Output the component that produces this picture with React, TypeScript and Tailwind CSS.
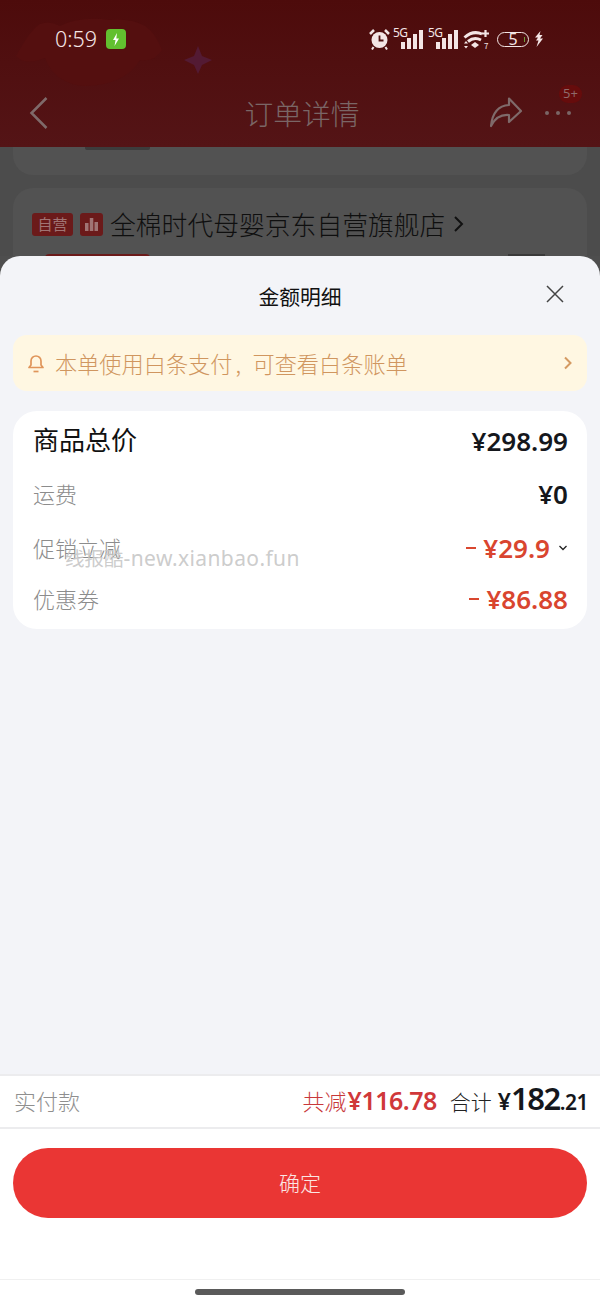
import React from "react";

const font = { fontFamily: '"Noto Sans CJK SC", "Noto Sans", sans-serif' };
const latin = { fontFamily: '"Noto Sans", "Noto Sans CJK SC", sans-serif' };

function Signal() {
  return (
    <span className="relative flex h-[20px] w-[30px] items-end justify-end gap-[2px]">
      <span className="absolute left-0 top-[-3px] text-[12px] leading-[14px] tracking-[-0.500px] text-[#f3e5e5]" style={latin}>5G</span>
      <span className="h-[7px] w-[4px] bg-[#f3e5e5]" />
      <span className="h-[11px] w-[4px] bg-[#f3e5e5]" />
      <span className="h-[15px] w-[4px] bg-[#f3e5e5]" />
      <span className="h-[19px] w-[4px] bg-[#f3e5e5]" />
    </span>
  );
}

function StatusBar() {
  return (
    <div className="relative flex h-[78px] items-center justify-between pl-[55px] pr-[56px]">
      <div className="flex items-center gap-[9px]">
        <span className="text-[21.500px] leading-[24px] text-[#f5e6e6] font-light" style={latin}>0:59</span>
        <span className="flex h-[20px] w-[20px] items-center justify-center rounded-[4px] bg-[#62c02f]">
          <svg width="8" height="13" viewBox="0 0 8 13"><path d="M5 0 1 7h2.500L2.500 13 7 5.500H4.300z" fill="#fff" /></svg>
        </span>
      </div>
      <div className="flex items-center">
        <svg width="21" height="22" viewBox="0 0 21 22" className="mr-[3px]">
          <circle cx="10.500" cy="12" r="8" fill="#f3e5e5" />
          <path d="M10.500 7.500V12.500H14.500" stroke="#4d1010" strokeWidth="1.800" fill="none" />
          <path d="M1 6 5 2M20 6 16 2" stroke="#f3e5e5" strokeWidth="2.500" />
          <path d="M4.500 19 3 21.500M16.500 19 18 21.500" stroke="#f3e5e5" strokeWidth="2" />
        </svg>
        <Signal />
        <span className="w-[5px]" />
        <Signal />
        <svg width="27" height="22" viewBox="0 0 27 22" className="ml-[5px]">
          <path d="M1.500 9.500Q10 2 19 6" stroke="#f3e5e5" strokeWidth="3" fill="none" />
          <path d="M5 13.500Q11 8.500 18 12" stroke="#f3e5e5" strokeWidth="3" fill="none" />
          <path d="M8 17 12 14 16 17 12 20z" fill="#f3e5e5" />
          <path d="M19 5.500H26M22.500 2V9" stroke="#f3e5e5" strokeWidth="2.200" />
          <path d="M1 15.500 3 13 5 15.500zM1 18 3 20.500 5 18z" fill="#f3e5e5" />
          <text x="21" y="21" fontSize="8" fill="#f3e5e5">7</text>
        </svg>
        <span className="relative ml-[7px] flex h-[15px] w-[32px] items-center justify-center rounded-full border border-[#f3e5e5] text-[16px] leading-[15px] text-[#f3e5e5]" style={latin}>
          5
          <span className="absolute right-[3px] top-[4px] h-[5px] w-[1.500px] bg-[#6f9a3a]" />
        </span>
        <svg width="10" height="18" viewBox="0 0 10 16" className="ml-[5px]">
          <path d="M6.500 0 1 6.500h3L2 9.500h2.500L2.500 16 9 7.500H6L8.500 4H5.500z" fill="#f3e5e5" />
        </svg>
      </div>
    </div>
  );
}

function NavBar() {
  return (
    <div className="grid h-[69px] grid-cols-[1fr_auto_1fr] items-start">
      <svg width="20" height="34" viewBox="0 0 20 34" className="ml-[29px] mt-[18px]">
        <path d="M17.500 2 2.500 17 17.500 32" stroke="#7f6a6a" strokeWidth="2.500" fill="none" />
      </svg>
      <span className="ml-[4px] mt-[16px] text-[28.800px] leading-[38px] font-light text-[#7a6666]">订单详情</span>
      <div className="relative mr-[29px] mt-[18px] flex items-start justify-self-end">
        <svg width="34" height="32" viewBox="0 0 34 32" className="mr-[22px]">
          <path d="M20 2.500 32 15 20 26V19Q8 18 2 30 4 10 20 9z" stroke="#7f6a6a" strokeWidth="2.200" fill="none" strokeLinejoin="round" />
        </svg>
        <span className="mt-[15px] flex gap-[7px]">
          <span className="h-[4px] w-[4px] rounded-full bg-[#7a6666]" />
          <span className="h-[4px] w-[4px] rounded-full bg-[#7a6666]" />
          <span className="h-[4px] w-[4px] rounded-full bg-[#7a6666]" />
        </span>
        <span className="absolute right-[-11px] top-[-11px] flex h-[18px] w-[23px] items-center justify-center rounded-full bg-[#660c0c] text-[13px] text-[#8e6a6a]" style={latin}>5+</span>
      </div>
    </div>
  );
}

function Row({ label, children, className }: { label: string; children: React.ReactNode; className: string }) {
  return (
    <div className={`flex items-center justify-between ${className}`}>
      <span className="mb-[3px] text-[22px] font-light leading-[30px] text-[#8c8c8c]" style={font}>{label}</span>
      {children}
    </div>
  );
}

export default function App() {
  return (
    <div className="relative flex h-[1304px] w-[600px] flex-col overflow-hidden bg-[#4e4e4e]" style={font}>
      <div className="relative h-[147px] shrink-0 bg-gradient-to-b from-[#4d0b0b] to-[#541416]">
        <svg width="230" height="90" viewBox="0 0 230 90" className="absolute left-0 top-0">
          <path d="M16 56Q30 30 40 24 50 20 60 26 80 16 110 20 130 18 145 26 155 32 162 50 155 62 140 60 125 85 85 86 55 84 45 58 25 66 16 56z" fill="#540f0f" />
          <path d="M198 46 202 56 212 60 202 65 198 74 194 65 184 60 194 56z" fill="#531a33" />
        </svg>
        <div className="relative">
          <StatusBar />
          <NavBar />
        </div>
      </div>
      <div className="h-[109px] shrink-0 overflow-hidden bg-[#4c4c4c] px-[13px]">
        <div className="h-[28px] rounded-b-[20px] bg-[#525252]">
          <div className="ml-[72px] h-[3px] w-[65px] rounded-b-[2px] bg-[#3c3c3c]" />
        </div>
        <div className="mt-[13px] h-[100px] rounded-t-[20px] bg-[#525252] pl-[19px] pr-[10px] pt-[19px]">
          <div className="flex items-center">
            <span className="flex h-[23px] w-[41px] items-center justify-center rounded-[3px] bg-[#6b1a1a] text-[15px] text-[#a07474]">自营</span>
            <span className="ml-[7px] flex h-[23px] w-[23px] items-center justify-center rounded-[3px] bg-[#6b1a1a]">
              <svg width="15" height="14" viewBox="0 0 15 14"><path d="M1 6h3.500v8H1zM5.800 1h3.500v13H5.800zM10.500 5H14v9h-3.500z" fill="#a07474" /></svg>
            </span>
            <span className="ml-[7px] text-[25.800px] leading-[34px] font-light text-[#0f0f0f]">全棉时代母婴京东自营旗舰店</span>
            <svg width="11" height="18" viewBox="0 0 11 18" className="ml-[8px]"><path d="M2 2l7 7-7 7" stroke="#111111" strokeWidth="2" fill="none" /></svg>
          </div>
          <div className="mt-[13px] flex items-start justify-between pr-[32px]">
            <span className="ml-[13px] h-[4px] w-[105px] rounded-t-[4px] bg-[#6b1a1a]" />
            <span className="h-[4px] w-[37px] bg-[#3a3a3a]" />
          </div>
        </div>
      </div>

      <div className="flex min-h-0 flex-1 flex-col rounded-t-[20px] bg-[#f3f4f8]">
        <div className="relative flex h-[79px] shrink-0 items-center justify-center">
          <span className="text-[20.800px] leading-[28px] text-[#111111]">金额明细</span>
          <svg width="18" height="18" viewBox="0 0 18 18" className="absolute right-[36px] top-[29px]">
            <path d="M1 1 17 17M17 1 1 17" stroke="#444444" strokeWidth="1.500" />
          </svg>
        </div>

        <div className="mx-[13px] flex h-[56px] shrink-0 items-center rounded-[14px] bg-[#fff7e2] pl-[14px] pr-[14px]">
          <svg width="18" height="20" viewBox="0 0 18 20">
            <path d="M2 14.500h14l-2-2.500V8A5 5 0 0 0 4 8v4z" stroke="#e0955a" strokeWidth="1.700" fill="none" strokeLinejoin="round" />
            <path d="M6.500 18.500h5" stroke="#e0955a" strokeWidth="1.700" />
          </svg>
          <span className="ml-[10px] flex-1 text-[22.200px] leading-[30px] font-light text-[#d0965f]">
            本单使用白条支付<span className="inline-block w-[20px] pl-[3px]">,</span>可查看白条账单
          </span>
          <svg width="10" height="14" viewBox="0 0 10 14"><path d="M2 1.500 7.500 7 2 12.500" stroke="#d49a62" strokeWidth="2" fill="none" /></svg>
        </div>

        <div className="mx-[13px] mt-[20px] h-[218px] shrink-0 rounded-[24px] bg-white pl-[20px] pr-[19px] pt-[9px]" style={latin}>
          <div className="flex h-[38px] items-center justify-between">
            <span className="text-[26px] leading-[36px] text-[#111111]" style={font}>商品总价</span>
            <span className="mt-[4px] text-[26px] font-semibold leading-[36px] text-[#15171c]">¥298.99</span>
          </div>
          <Row label="运费" className="mt-[17px] h-[38px]">
            <span className="text-[26px] font-semibold leading-[36px] text-[#15171c]">¥0</span>
          </Row>
          <Row label="促销立减" className="mt-[16px] h-[38px]">
            <span className="flex items-center">
              <span className="mr-[7px] h-[2px] w-[10px] bg-[#d9472f]" />
              <span className="text-[26px] font-semibold leading-[36px] text-[#d9452f]">¥29.9</span>
              <svg width="10" height="6" viewBox="0 0 9 6" className="ml-[8px]"><path d="M1 1l3.500 3.500L8 1" stroke="#222222" strokeWidth="1.300" fill="none" /></svg>
            </span>
          </Row>
          <Row label="优惠券" className="mt-[13px] h-[38px]">
            <span className="flex items-center">
              <span className="mr-[7px] h-[2px] w-[10px] bg-[#d9472f]" />
              <span className="text-[26px] font-semibold leading-[36px] text-[#d9452f]">¥86.88</span>
            </span>
          </Row>
        </div>

        <div className="flex-1" />

        <div className="flex h-[55px] shrink-0 items-center justify-between border-y-2 border-[#ececee] bg-white pb-[3px] pl-[14px] pr-[12px]">
          <span className="text-[22px] font-light leading-[30px] text-[#8f8f8f]">实付款</span>
          <span className="flex items-baseline" style={latin}>
            <span className="text-[22px] font-light text-[#c8383a]" style={font}>共减</span>
            <span className="ml-[1px] text-[25px] font-semibold tracking-[-0.500px] text-[#d0383a]">¥116.78</span>
            <span className="ml-[13px] text-[21px] font-light text-[#222222]" style={font}>合计</span>
            <span className="ml-[6px] text-[23px] font-semibold text-[#15171c]">¥</span>
            <span className="text-[31px] font-semibold tracking-[-1.500px] leading-[36px] text-[#15171c]">182</span>
            <span className="text-[21px] font-semibold tracking-[-0.500px] text-[#15171c]">.21</span>
          </span>
        </div>

        <div className="flex h-[175px] shrink-0 flex-col bg-white">
          <div className="mx-[13px] mt-[19px] flex h-[70px] items-center justify-center rounded-full bg-[#ea3634] text-[21px] font-light text-[#fbe6e4]">确定</div>
          <div className="mt-auto h-[25px] border-t border-[#f0f0f0]">
            <div className="mx-auto mt-[9px] h-[6px] w-[210px] rounded-full bg-[#5a5a5a]" />
          </div>
        </div>
      </div>

      <span className="absolute left-[65px] top-[544px] flex items-baseline leading-[28px] text-[#c6c6c6]/90">
        <span className="text-[19.500px]">线报酷</span>
        <span className="text-[21px] tracking-[0.400px]" style={latin}>-new.xianbao.fun</span>
      </span>
    </div>
  );
}
